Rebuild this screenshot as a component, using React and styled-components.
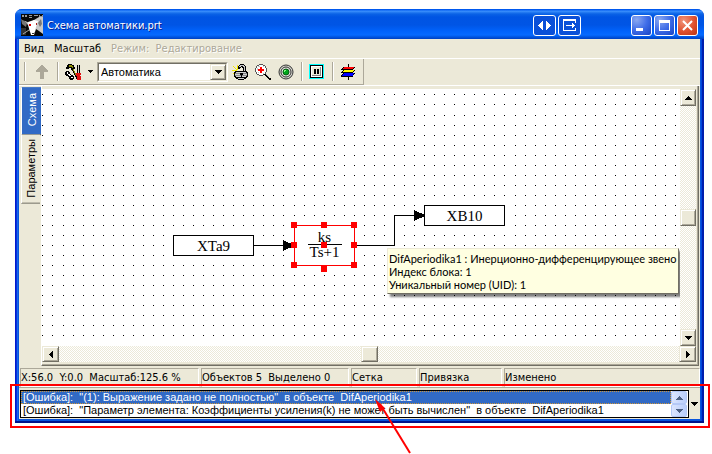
import React from "react";
import styled, { createGlobalStyle, css } from "styled-components";

const UI_FONT = '"DejaVu Sans Condensed", "DejaVu Sans", sans-serif';
const LIST_FONT = '"Liberation Sans", Arial, sans-serif';
const HINT_FONT = 'Lato, "Liberation Sans", sans-serif';
const FACE = "#ece9d8";
const SHADE = "#aca899";
const DARK = "#716f64";
const SELECT = "#316ac5";

const GlobalStyle = createGlobalStyle`
  *, *::before, *::after { box-sizing: border-box; }
  body { margin: 0; background: #fff; overflow: hidden; }
  button, select { font: inherit; color: inherit; margin: 0; padding: 0; border: 0; }
`;

const Page = styled.main`
  display: flex;
  height: 100vh;
  padding: 9px 8px 31px 15px;
  font: 11px/13px ${UI_FONT};
  color: #000;
`;

const Window = styled.section`
  flex: 1;
  min-width: 0;
  display: flex;
  flex-direction: column;
  padding: 0 4px 4px;
  border-radius: 7px 7px 0 0;
  background: linear-gradient(90deg, #0019cf 0 1px, #0831d9 1px 2px, #166aee 2px 3px, #0855dd 3px calc(100% - 3px), #0045dc calc(100% - 3px) calc(100% - 2px), #001dae calc(100% - 2px));
  box-shadow: inset 0 -2px #00138c;
`;

const TitleBar = styled.header`
  display: flex;
  align-items: center;
  height: 30px;
  margin: 0 -4px;
  padding: 2px 6px 0;
  border-radius: 7px 7px 0 0;
  background: linear-gradient(#0058ee 0, #0058ee 1px, #3f93ff 2px, #2a80f4 3px, #0a62e6 5px, #0054e3 8px, #0055e5 16px, #0062fb 22px, #066aff 26px, #0054e0 28px, #0040c0 30px);
  color: #fff;
`;

const Title = styled.h1`
  flex: 1;
  margin: 0;
  padding: 2px 0 0 4px;
  font: 11px/16px ${UI_FONT};
  text-shadow: 1px 1px #0a1e8c;
  white-space: nowrap;
`;

const TitleGroup = styled.div`
  display: flex;
  gap: 2px;
  margin-left: ${(p) => p.$lead || 0}px;
`;

const TitleButton = styled.button`
  width: ${(p) => (p.$wide ? 23 : 21)}px;
  height: 21px;
  border: 1px solid #fff;
  border-radius: 3px;
  display: grid;
  place-items: center;
  color: #fff;
  background: ${(p) =>
    p.$tone === "close"
      ? "radial-gradient(circle at 30% 25%, #f0947a, #e0502e 55%, #bc3310)"
      : p.$tone === "nav"
      ? "#0a50d8"
      : "radial-gradient(circle at 25% 20%, #8aa8f0, #3f6de8 50%, #1743c4)"};
  svg { display: block; }
`;

const Body = styled.div`
  flex: 1;
  min-height: 0;
  display: flex;
  flex-direction: column;
  background: ${FACE};
`;

const MenuBar = styled.nav`
  display: flex;
  gap: 10px;
  height: 20px;
  padding: 0 5px;
  border-bottom: 1px solid #fff;
`;

const MenuItem = styled.button`
  background: none;
  white-space: pre;
  &:disabled { color: ${SHADE}; text-shadow: 1px 1px #fff; }
`;

const ToolRow = styled.div`
  display: flex;
  height: 27px;
  border-bottom: 1px solid #fff;
`;

const ToolBar = styled.div`
  display: flex;
  align-items: center;
  height: 26px;
  padding: 0 4px;
  border-right: 1px solid ${SHADE};
  border-bottom: 1px solid ${SHADE};
`;

const Divider = styled.span`
  width: 2px;
  height: 19px;
  margin: 0 ${(p) => p.$after}px 0 ${(p) => p.$before}px;
  border-left: 1px solid ${SHADE};
  border-right: 1px solid #fff;
`;

const ToolButton = styled.button`
  display: grid;
  place-items: center;
  width: ${(p) => p.$w || 23}px;
  height: 22px;
  background: none;
  svg { display: block; }
`;

const Combo = styled.label`
  position: relative;
  display: block;
  width: 131px;
  height: 20px;
  border: 1px solid ${SHADE};
  border-right-color: #fff;
  border-bottom-color: #fff;
`;

const ComboSelect = styled.select`
  appearance: none;
  width: 100%;
  height: 100%;
  padding: 0 18px 0 2px;
  border: 1px solid ${DARK};
  border-right-color: ${FACE};
  border-bottom-color: ${FACE};
  border-radius: 0;
  background: #fff;
  font: 11px/16px ${LIST_FONT};
`;

const bevel = css`
  background: ${FACE};
  border: 1px solid;
  border-color: ${FACE} ${DARK} ${DARK} ${FACE};
  box-shadow: inset 1px 1px #fff, inset -1px -1px ${SHADE};
`;

const ComboArrow = styled.span`
  position: absolute;
  top: 1px;
  right: 1px;
  bottom: 1px;
  width: 16px;
  display: grid;
  place-items: center;
  pointer-events: none;
  ${bevel}
`;

const Work = styled.div`
  flex: 1;
  min-height: 0;
  display: flex;
  padding-right: 1px;
`;

const Tabs = styled.div`
  width: 22px;
  display: flex;
  flex-direction: column;
  align-items: flex-start;
  padding: 1px 0 0 2px;
`;

const Tab = styled.button`
  writing-mode: vertical-rl;
  transform: rotate(180deg);
  width: ${(p) => (p.$active ? 20 : 19)}px;
  padding: ${(p) => (p.$active ? "8px 0 6px" : "5px 0 4px")};
  text-align: center;
  font: 11px/16px ${LIST_FONT};
  color: ${(p) => (p.$active ? "#fff" : "#000")};
  background: ${(p) => (p.$active ? SELECT : FACE)};
  border-left: 0;
  border-top: 1px solid ${DARK};
  border-right: 1px solid #fff;
`;

const CanvasPanel = styled.div`
  flex: 1;
  min-width: 0;
  display: grid;
  grid-template: 1fr 16px / 1fr 16px;
  padding: 3px 2px 3px 0;
  border-left: 1px solid #fff;
  border-right: 1px solid ${DARK};
  border-bottom: 1px solid ${DARK};
  box-shadow: inset -1px -1px ${SHADE};
`;

const Canvas = styled.div`
  position: relative;
  overflow: hidden;
  background: #fff;
`;

const Wires = styled.svg`
  position: absolute;
  inset: 0;
  width: 100%;
  height: 100%;
  display: block;
`;

const NodeBox = styled.div`
  position: absolute;
  left: ${(p) => p.$x}px;
  top: ${(p) => p.$y}px;
  width: 81px;
  height: 21px;
  border: 1px solid #000;
  background: #fff;
  text-align: center;
  font: 15px/20px "Liberation Serif", serif;
`;

const Fraction = styled.div`
  position: absolute;
  left: 252px;
  top: 136px;
  width: 61px;
  height: 41px;
  border: 1px solid #f00;
  background: #fff;
  display: flex;
  flex-direction: column;
  align-items: center;
  padding-top: 4px;
  font: 15px/14px "Liberation Serif", serif;
`;

const Numerator = styled.span`
  width: 34px;
  text-align: center;
  border-bottom: 1px solid #000;
`;

const Handle = styled.i`
  position: absolute;
  left: ${(p) => p.$x}px;
  top: ${(p) => p.$y}px;
  width: 6px;
  height: 6px;
  background: #f00;
`;

const Hint = styled.div`
  position: absolute;
  left: 345px;
  top: 159px;
  min-width: 289px;
  padding: 3px 1px 2px;
  background: #ffffe1;
  border: 1px solid;
  border-color: ${FACE} ${DARK} ${DARK} ${FACE};
  box-shadow: 3px 3px 2px rgba(0, 0, 0, 0.5);
  font-family: ${HINT_FONT};
  white-space: nowrap;
  p { margin: 0; }
`;

const ScrollTrack = styled.div`
  display: flex;
  flex-direction: ${(p) => (p.$vertical ? "column" : "row")};
  grid-column: ${(p) => (p.$vertical ? "2" : "1 / 3")};
  justify-content: space-between;
  background: repeating-conic-gradient(#fff 0 25%, ${FACE} 0 50%) 0 0 / 2px 2px;
`;

const ScrollButton = styled.button`
  width: ${(p) => (p.$vertical ? 16 : 17)}px;
  height: ${(p) => (p.$vertical ? 17 : 16)}px;
  display: grid;
  place-items: center;
  ${bevel}
`;

const StatusBar = styled.footer`
  display: grid;
  grid-template-columns: 179px 148px 66px 83px 1fr;
  gap: 2px;
  padding: 2px 0 0 1px;
  height: 22px;
  border-bottom: 1px solid ${SHADE};
`;

const StatusCell = styled.span`
  padding: 2px 0;
  border: 1px solid;
  border-color: ${SHADE} #fff #fff ${SHADE};
  white-space: pre;
  overflow: hidden;
  line-height: 14px;
`;

const Errors = styled.div`
  position: relative;
  display: flex;
  padding: 2px 0 1px 1px;
`;

const ErrorBox = styled.div`
  flex: 1;
  min-width: 0;
  display: flex;
  padding-right: 1px;
  border: 1px solid #000;
  background: #fff;
`;

const ErrorList = styled.ul`
  flex: 1;
  min-width: 0;
  margin: 0;
  padding: 0;
  list-style: none;
  font: 11px/13px ${LIST_FONT};
`;

const ErrorItem = styled.li`
  padding-left: 2px;
  white-space: pre;
  overflow: hidden;
  color: ${(p) => (p.$active ? "#fff" : "#000")};
  background: ${(p) => (p.$active ? SELECT : "#fff")};
  outline: ${(p) => (p.$active ? "1px dotted #ce953a" : "none")};
  outline-offset: -1px;
`;

const Spinner = styled.div`
  width: 16px;
  display: flex;
  flex-direction: column;
`;

const SpinButton = styled.button`
  height: 13px;
  display: grid;
  place-items: center;
  color: #4d6185;
  border: 1px solid #b4c8f6;
  border-radius: 2px;
  background: linear-gradient(90deg, #dbe5fe, #b9cdfa);
`;

const DropButton = styled.button`
  width: 11px;
  display: grid;
  place-items: center;
  background: ${FACE};
`;

const Marker = styled.div`
  position: absolute;
  top: -4px;
  right: -10px;
  bottom: -9px;
  left: -9px;
  border: 2px solid #f00;
  pointer-events: none;
`;

const Pointer = styled.svg`
  position: absolute;
  left: 356px;
  top: 11px;
  pointer-events: none;
`;

const SHAPES = {
  up: "M3 0h1v1h1v1h1v1h1v1H0V3h1V2h1V1h1z",
  down: "M0 0h7v1H6v1H5v1H4v1H3V3H2V2H1V1H0z",
  left: "M3 0h1v7H3V6H2V5H1V4H0V3h1V2h1V1h1z",
  right: "M0 0h1v1h1v1h1v1h1v1H3v1H2v1H1v1H0z",
};

function Arrow({ dir }) {
  const flat = dir === "up" || dir === "down";
  return (
    <svg width={flat ? 7 : 4} height={flat ? 4 : 7} shapeRendering="crispEdges" aria-hidden="true">
      <path d={SHAPES[dir]} fill="currentColor" />
    </svg>
  );
}

function Icon({ size = 16, children }) {
  return (
    <svg width={size} height={size} viewBox={`0 0 ${size} ${size}`} fill="none" shapeRendering="crispEdges" aria-hidden="true">
      {children}
    </svg>
  );
}

const RatIcon = () => (
  <svg width="22" height="22" viewBox="0 0 22 22" aria-hidden="true">
    <path fill="#080808" d="M0 0h22v22H0z" />
    <path fill="#c8c8c8" d="M0 6l4 1 5 2 4-3 5-3 4-1v18l-4-3-3-2-1 3H9l-2-7-4-4z" />
    <path fill="#fff" d="M7 8l6-2 4 1-2 6-2 8h-3l-2-7z" />
    <path fill="#999" d="M1 1h2v2H1zM4 1h2v2H4zM8 1h3v1H8zM8 3h3v1H8zM13 1h4v1h-4zM18 1h1v1h2V1h1v2h-4z" />
    <path fill="#777" d="M0 5l6 4-1 4-4-3zM20 5l-3 4 2 4 2-3z" />
    <path fill="#d00" d="M8 10h2v2H8z" />
    <path fill="#a22" d="M15 9h1v2h-1z" />
    <path fill="#333" d="M11 19h2v1h-2zM0 14h5v7H0z" />
    <path stroke="#aaa" d="M2 20l6-4" />
  </svg>
);

const UpIcon = () => (
  <Icon>
    <path fill={SHADE} d="M8 1h1v1h1v1h1v1h1v1h1v1h1v2h-4v7H6V8H2V6h1V5h1V4h1V3h1V2h1V1z" />
  </Icon>
);

const ToolsIcon = () => (
  <Icon>
    <path fill="#000" d="M3 0h4v1h2v2h1v2H8v1H6V4H4v1H1V3h1V1h1z" />
    <path fill="#000" d="M7 5h2v2h1v2h1v2h1v2h1v2h-2v-2h-1v-2H9V9H8V7H7z" />
    <path fill="#8c8c00" d="M4 1h3v1h1v2H7V3H4zM8 5h1v2h1v2h1v2h-1V9H9V7H8z" />
    <path fill="#000" d="M12 1h1v8h-1zM14 1h1v8h-1z" />
    <path fill="#d4d0c8" d="M13 1h1v8h-1z" />
    <path fill="#e01010" d="M11 9h5v2h-1v1h1v4h-4v-4h-1z" />
    <path fill="#000" d="M1 7h3v1h1v2h1v1h2v1h1v3H8v1H5v-1H4v-2H3v-1H1v-1H0V8h1z" />
    <path fill="#fff" d="M2 8h1v2H2zM3 10h2v1h1v1H4v-1H3zM6 13h2v1H6z" />
  </Icon>
);

const LockIcon = () => (
  <Icon>
    <path stroke="#f5e800" d="M1 2l4 4M5 1v5M0 6h5M1 10l3-3M7 2L5 4" />
    <path fill="#000" d="M6 2h1V1h1V0h4v1h1v1h1v6h-3V4h-1V3H9v1H8v1H6z" />
    <path fill="#c8c8c8" d="M7 2h1V1h4v1h1v5h-1V3h-1V2H9v1H7z" />
    <path fill="#000" d="M3 7h12v1h1v5h-1v1h-1v1h-2v1H6v-1H4v-1H3v-1H2V8h1z" />
    <path fill="#d0d0d0" d="M4 8h10v1H4zM3 10h12v1H3zM4 12h10v1H4zM6 14h6v1H6z" />
    <path fill="#888" d="M3 9h12v1H3zM3 11h12v1H3z" />
    <path fill="#000" d="M8 9h3v2h-1v3H9v-3H8z" />
  </Icon>
);

const ZoomIcon = () => (
  <Icon>
    <path fill="#555" d="M4 0h4v1h2v1h1v2h1v4h-1v2h-1v1H8v1H4v-1H2v-1H1V8H0V4h1V2h1V1h2z" />
    <path fill="#fff" d="M4 1h4v1h2v2h1v4h-1v2H8v1H4v-1H2V8H1V4h1V2h2z" />
    <path fill="#c4c4c4" d="M3 2h2v1H3zM2 4h1v2H2zM8 2h1v1H8zM8 9h1v1H8zM3 8h1v1H3z" />
    <path fill="#f00" d="M5 3h2v2h2v2H7v2H5V7H3V5h2z" />
    <path fill="#000" d="M9 10h2v1h1v1h1v1h1v1h2v2h-2v-1h-1v-1h-1v-1h-1v-1h-1v-1H9z" />
    <path fill="#ccc" d="M11 10h1v1h1v1h1v1h-1v-1h-1v-1h-1z" />
  </Icon>
);

const TargetIcon = () => (
  <svg width="16" height="16" viewBox="0 0 16 16" aria-hidden="true">
    <circle cx="8" cy="8" r="7" stroke="#333" fill="#d4d4cc" />
    <circle cx="8" cy="8" r="5" stroke="#333" fill="#e4e4e0" />
    <circle cx="8" cy="8" r="3" fill="#00a51c" stroke="#075c12" />
    <path fill="#7dff7d" d="M6 6h2v1H7v1H6z" />
  </svg>
);

const PauseIcon = () => (
  <Icon size={15}>
    <path fill="#0ff" d="M0 0h15v15H0z" />
    <path fill="#000" d="M1 1h13v13H1z" />
    <path fill="#fff" d="M2 2h11v11H2z" />
    <path fill={FACE} d="M3 3h9v9H3z" />
    <path fill="#888" d="M11 3h1v9H3v-1h8z" />
    <path fill="#000" d="M5 5h2v5H5zM8 5h2v5H8z" />
  </Icon>
);

const LayersIcon = () => (
  <Icon>
    <path fill="#000" d="M8 0h1v16H8zM3 3h12v1h-1v1h-1v1H1V5h1V4h1zM3 6h12v1h-1v1h-1v1H1V8h1V7h1zM3 9h12v1h-1v1h-1v2H1v-2h1v-1h1z" />
    <path fill="#f00" d="M4 3h10v1h-1v1H3V4h1z" />
    <path fill="#ff0" d="M4 6h10v1h-1v1H3V7h1z" />
    <path fill="#00f" d="M4 9h10v1h-1v2H2v-1h1v-1h1z" />
  </Icon>
);

const GRID_STEP = 10.045;

function dotPath(columns, rows) {
  let d = "";
  for (let r = 0; r < rows; r++) {
    for (let c = 0; c < columns; c++) {
      d += `M${Math.round(0.42 + c * GRID_STEP)} ${Math.round(5.42 + r * GRID_STEP)}h1v1h-1z`;
    }
  }
  return d;
}

const DOTS = dotPath(200, 120);

const HANDLES = [
  [-4, -4], [26, -4], [56, -4],
  [-4, 16], [26, 16], [56, 16],
  [-4, 36], [26, 40], [56, 36],
];

function Scheme() {
  return (
    <Canvas>
      <Wires shapeRendering="crispEdges" aria-hidden="true">
        <path d={DOTS} fill="#000" />
        <path d="M212 156.5H252M313 156.5H352.5V126.5H382" stroke="#000" fill="none" />
        <path d="M241 151l11 5v1l-11 5zM372 121l11 5v1l-11 5z" fill="#000" />
      </Wires>
      <NodeBox $x={131} $y={146}>XTa9</NodeBox>
      <NodeBox $x={382} $y={116}>XB10</NodeBox>
      <Fraction>
        <Numerator>ks</Numerator>
        <span>Ts+1</span>
        {HANDLES.map(([x, y]) => (
          <Handle key={`${x},${y}`} $x={x} $y={y} />
        ))}
      </Fraction>
      <Hint role="tooltip">
        <p>DifAperiodika1 : Инерционно-дифференцирующее звено</p>
        <p>Индекс блока: 1</p>
        <p>Уникальный номер (UID): 1</p>
      </Hint>
    </Canvas>
  );
}

function ScrollBar({ vertical }) {
  return (
    <ScrollTrack $vertical={vertical}>
      <ScrollButton $vertical={vertical} aria-label={vertical ? "Вверх" : "Влево"}>
        <Arrow dir={vertical ? "up" : "left"} />
      </ScrollButton>
      <ScrollButton $vertical={vertical} aria-label="Ползунок" />
      <ScrollButton $vertical={vertical} aria-label={vertical ? "Вниз" : "Вправо"}>
        <Arrow dir={vertical ? "down" : "right"} />
      </ScrollButton>
    </ScrollTrack>
  );
}

const STATUS = [
  "X:56.0  Y:0.0  Масштаб:125.6 %",
  "Объектов 5  Выделено 0",
  "Сетка",
  "Привязка",
  "Изменено",
];

const ERRORS = [
  '[Ошибка]:  "(1): Выражение задано не полностью"  в объекте  DifAperiodika1',
  '[Ошибка]:  "Параметр элемента: Коэффициенты усиления(k) не может быть вычислен"  в объекте  DifAperiodika1',
];

export default function App() {
  return (
    <Page>
      <GlobalStyle />
      <Window>
        <TitleBar>
          <RatIcon />
          <Title>Схема автоматики.prt</Title>
          <TitleGroup>
            <TitleButton $wide $tone="nav" aria-label="Развернуть по ширине">
              <Icon size={15}><path fill="#fff" d="M6 3v9H5v-1H4v-1H3V9H2V8H1V7h1V6h1V5h1V4h1V3zM9 3h1v1h1v1h1v1h1v1h1v1h-1v1h-1v1h-1v1h-1v1H9z" /></Icon>
            </TitleButton>
            <TitleButton $wide $tone="nav" aria-label="Закрепить">
              <Icon size={15}><path fill="#fff" d="M1 1h13v4h-1V3H2v9h11v-2h1v3H1zM4 7h6V5h1v1h1v1h1v1h-1v1h-1v1h-1V8H4z" /></Icon>
            </TitleButton>
          </TitleGroup>
          <TitleGroup $lead={50}>
            <TitleButton aria-label="Свернуть"><Icon size={15}><path fill="#fff" d="M2 10h7v3H2z" /></Icon></TitleButton>
            <TitleButton aria-label="Развернуть"><Icon size={15}><path fill="#fff" d="M2 2h11v11H2zM3 5v7h9V5z" fillRule="evenodd" /></Icon></TitleButton>
            <TitleButton $tone="close" aria-label="Закрыть">
              <svg width="15" height="15" aria-hidden="true"><path stroke="#fff" strokeWidth="2" d="M3 3l9 9M12 3l-9 9" /></svg>
            </TitleButton>
          </TitleGroup>
        </TitleBar>
        <Body>
          <MenuBar>
            <MenuItem>Вид</MenuItem>
            <MenuItem>Масштаб</MenuItem>
            <MenuItem disabled>Режим:  Редактирование</MenuItem>
          </MenuBar>
          <ToolRow>
            <ToolBar>
              <Divider $before={1} $after={4} />
              <ToolButton aria-label="Вверх"><UpIcon /></ToolButton>
              <Divider $before={4} $after={2} />
              <ToolButton aria-label="Инструменты"><ToolsIcon /></ToolButton>
              <ToolButton $w={13} aria-label="Список инструментов">
                <svg width="5" height="3" shapeRendering="crispEdges" aria-hidden="true"><path d="M0 0h5v1H4v1H3v1H2V2H1V1H0z" /></svg>
              </ToolButton>
              <Combo>
                <ComboSelect aria-label="Библиотека" defaultValue="a">
                  <option value="a">Автоматика</option>
                </ComboSelect>
                <ComboArrow><Arrow dir="down" /></ComboArrow>
              </Combo>
              <ToolButton aria-label="Блокировка"><LockIcon /></ToolButton>
              <ToolButton aria-label="Увеличить"><ZoomIcon /></ToolButton>
              <ToolButton aria-label="Центр"><TargetIcon /></ToolButton>
              <Divider $before={4} $after={2} />
              <ToolButton aria-label="Пауза"><PauseIcon /></ToolButton>
              <Divider $before={4} $after={2} />
              <ToolButton aria-label="Слои"><LayersIcon /></ToolButton>
            </ToolBar>
          </ToolRow>
          <Work>
            <Tabs>
              <Tab $active>Схема</Tab>
              <Tab>Параметры</Tab>
            </Tabs>
            <CanvasPanel>
              <Scheme />
              <ScrollBar vertical />
              <ScrollBar />
            </CanvasPanel>
          </Work>
          <StatusBar>
            {STATUS.map((text) => <StatusCell key={text}>{text}</StatusCell>)}
          </StatusBar>
          <Errors>
            <ErrorBox>
              <ErrorList>
                {ERRORS.map((text, i) => <ErrorItem key={text} $active={i === 0}>{text}</ErrorItem>)}
              </ErrorList>
              <Spinner>
                <SpinButton aria-label="Предыдущая"><Arrow dir="up" /></SpinButton>
                <SpinButton aria-label="Следующая"><Arrow dir="down" /></SpinButton>
              </Spinner>
            </ErrorBox>
            <DropButton aria-label="Показать все"><Arrow dir="down" /></DropButton>
            <Marker />
            <Pointer width="36" height="56" aria-hidden="true">
              <path stroke="#f00" strokeWidth="2" d="M5 5l30 49" />
              <path fill="#f00" d="M0 0l10 9-5 4z" />
            </Pointer>
          </Errors>
        </Body>
      </Window>
    </Page>
  );
}
